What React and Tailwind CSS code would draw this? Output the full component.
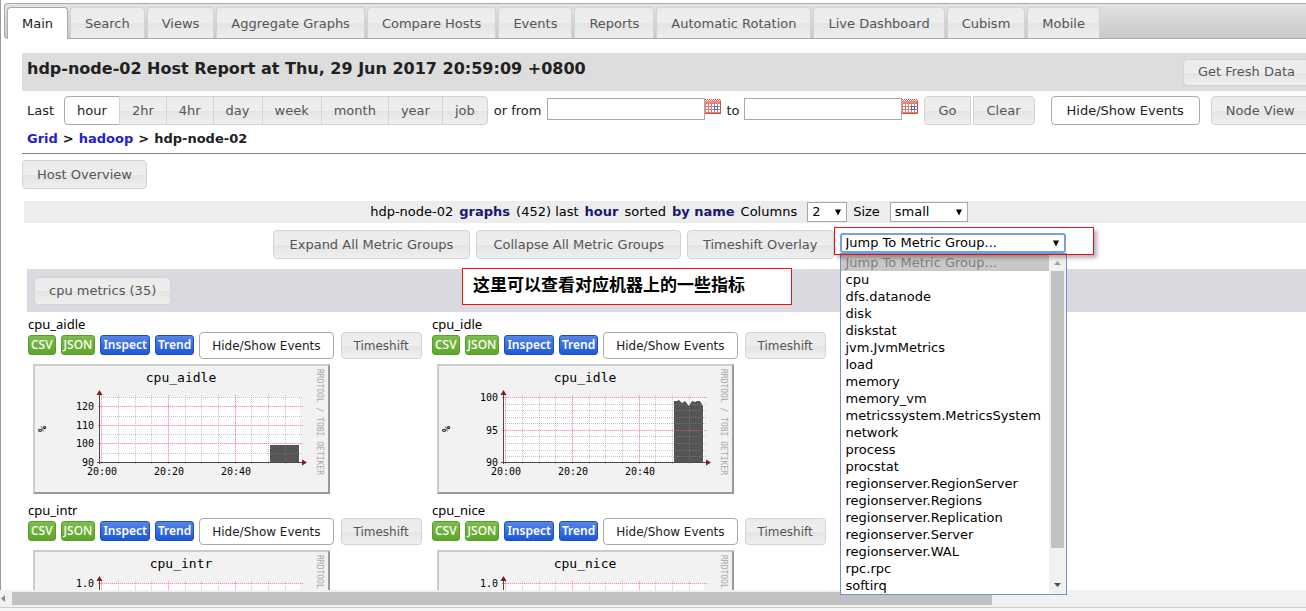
import React from "react";

const TABS = [
  "Main", "Search", "Views", "Aggregate Graphs", "Compare Hosts", "Events", "Reports",
  "Automatic Rotation", "Live Dashboard", "Cubism", "Mobile",
];

const RANGES = ["hour", "2hr", "4hr", "day", "week", "month", "year", "job"];

const GROUPS = [
  "Jump To Metric Group...", "cpu", "dfs.datanode", "disk", "diskstat", "jvm.JvmMetrics", "load",
  "memory", "memory_vm", "metricssystem.MetricsSystem", "network", "process", "procstat",
  "regionserver.RegionServer", "regionserver.Regions", "regionserver.Replication",
  "regionserver.Server", "regionserver.WAL", "rpc.rpc", "softirq",
];

const TIMES = [["20:00", 67], ["20:20", 134], ["20:40", 201]];

const GRAPHS = [
  {
    name: "cpu_aidle",
    unit: "%",
    labels: [["120", 40], ["110", 59], ["100", 77], ["90", 96]],
    times: TIMES,
    minor: [31, 50, 68, 87],
    area: "235,79 264,79 264,96 235,96",
  },
  {
    name: "cpu_idle",
    unit: "%",
    labels: [["100", 31], ["95", 64], ["90", 96]],
    times: TIMES,
    minor: [38, 44, 51, 57, 70, 77, 84, 90],
    area: "235,35 238,35 240,34 243,37 246,35 250,40 253,35 256,36 258,35 261,35 264,40 264,96 235,96",
  },
  { name: "cpu_intr", labels: [["1.0", 31]], times: [], minor: [44, 57, 77, 90] },
  { name: "cpu_nice", labels: [["1.0", 31]], times: [], minor: [44, 57, 77, 90] },
];

const GRADIENT = "bg-[linear-gradient(#ebebeb_0%,#eeeeee_50%,#e4e4e4_52%,#efefef_100%)]";

function Button({ children, active = false, size = "h-[29px] px-[14px]", round = "rounded-[4px]" }) {
  const look = active
    ? "border-[#aaaaaa] bg-white text-[#212121]"
    : `border-[#d3d3d3] text-[#555555] ${GRADIENT}`;
  return (
    <button type="button" className={`shrink-0 border whitespace-nowrap ${size} ${round} ${look}`}>
      {children}
    </button>
  );
}

function CalendarIcon() {
  return (
    <svg width="16" height="15" viewBox="0 0 16 15" shapeRendering="crispEdges" aria-hidden="true">
      <rect width="16" height="15" fill="#ec7a70" />
      <path d="M0 .5H16" stroke="#a8443c" strokeDasharray="1 1" />
      <path d="M1 .5H16M0 1.5H16" stroke="#fff" strokeDasharray="1 1" />
      <rect y="2" width="16" height="2" fill="#f0877c" />
      <path
        d="M1 5h2v2h-2zM4 5h2v2h-2zM7 5h2v2h-2zM10 5h2v2h-2zM13 5h2v2h-2zM1 8h2v2h-2zM4 8h2v2h-2zM7 8h2v2h-2zM10 8h2v2h-2zM13 8h2v2h-2zM1 11h2v2h-2zM4 11h2v2h-2zM7 11h2v2h-2zM10 11h2v2h-2zM13 11h2v2h-2z"
        fill="#fff"
      />
      <path d="M0 14.500H16M15.500 2V15" stroke="#c9544a" />
      <rect x="9.5" y="7.5" width="3" height="3" fill="#fff" stroke="#2d6be0" />
    </svg>
  );
}

function DateField({ label }) {
  return (
    <span className="mt-[2px] flex shrink-0 items-start self-start">
      <input aria-label={label} className="h-[22px] w-[158px] border border-[#a9a9a9] bg-white px-1" />
      <button type="button" aria-label={`Pick ${label}`} className="mt-px"><CalendarIcon /></button>
    </span>
  );
}

function Select({ label, options, width, look = "h-5 border-[#a9a9a9]", arrow = "right-[5px]" }) {
  return (
    <span className={`relative inline-flex items-center ${width}`}>
      <select aria-label={label} className={`w-full appearance-none border bg-white pl-1 text-[13px] leading-4 text-black ${look}`}>
        {options.map((o) => <option key={o}>{o}</option>)}
      </select>
      <svg className={`pointer-events-none absolute ${arrow}`} width="8" height="7" viewBox="0 0 8 7" aria-hidden="true">
        <path d="M1 .5h6L4 6.5z" fill="#000" />
      </svg>
    </span>
  );
}

function MetricGroupMenu() {
  return (
    <div className="absolute top-5 left-0 z-20 flex h-[342px] w-[227px] border border-[#6f92d6] bg-white">
      <ul className="min-w-0 flex-1 text-[13px] leading-[17px] text-black">
        {GROUPS.map((g, i) => (
          <li key={g} className={`h-[17px] pl-[5px] whitespace-nowrap ${i === 0 ? "bg-[#c8c8c8] text-[#808080]" : ""}`}>{g}</li>
        ))}
      </ul>
      <div className="flex w-[17px] shrink-0 flex-col items-center bg-[#f1f1f1]">
        <svg className="h-[17px] w-[9px] shrink-0" viewBox="0 0 9 17" aria-hidden="true"><path d="M1 11h7L4.500 7z" fill="#a3a3a3" /></svg>
        <div className="w-[13px] flex-1 bg-[#c1c1c1]" />
        <div className="h-[29px]" />
        <svg className="h-[17px] w-[9px] shrink-0" viewBox="0 0 9 17" aria-hidden="true"><path d="M1 6h7L4.500 10z" fill="#505050" /></svg>
      </div>
    </div>
  );
}

function Graph({ name, unit, labels, times, minor, area }) {
  const major = [66, 133, 200].map((x) => `M${x + 0.5} 29V98`)
    .concat(labels.map(([, y]) => `M63 ${y + 0.5}H268`))
    .join("");
  return (
    <svg
      width="297"
      height="130"
      viewBox="-2 -2 297 130"
      fontFamily="'DejaVu Sans Mono', monospace"
      role="img"
      aria-label={`${name} graph`}
      className="ml-[5px] block"
    >
      <rect x="-2" y="-2" width="297" height="130" fill="#cccccc" />
      <path d="M295 -2V128H-2L0 126H293V0z" fill="#9a9a9a" />
      <rect width="293" height="126" fill="#f2f2f2" />
      <rect x="65" y="31" width="200" height="65" fill="#fff" />
      {area && <polygon points={area} fill="#555555" />}
      <g strokeWidth="1" strokeDasharray="1 1">
        {[83, 100, 116, 150, 166, 183, 216, 233, 250].map((x) => (
          <path key={x} d={`M${x + 0.5} 29V98`} stroke="#8c8c8c" strokeOpacity=".5" />
        ))}
        {minor.map((y) => <path key={y} d={`M64 ${y + 0.5}H268`} stroke="#8c8c8c" strokeOpacity=".5" />)}
      </g>
      <path d={major} stroke="#ff5a74" strokeOpacity=".2" />
      <path d={major} stroke="#ff5a74" strokeOpacity=".6" strokeDasharray="1 1" />
      <path d="M64.500 98V28M62 96.500H268" stroke="#4a4a4a" />
      <path d="M61.500 29h6l-3-5zM267 93.500v6l5-3z" fill="#7f1d1d" />
      <text x="146" y="16" textAnchor="middle" fontSize="13">{name}</text>
      <g fontSize="10">
        {labels.map(([t, y]) => <text key={t} x="59" y={y + 4} textAnchor="end">{t}</text>)}
        {times.map(([t, x]) => <text key={t} x={x} y="109" textAnchor="middle">{t}</text>)}
      </g>
      {unit && <text transform="translate(11 66) rotate(-90)" fontSize="10" fontWeight="bold">{unit}</text>}
      <text transform="translate(282 3) rotate(90)" fontSize="8" fill="#a8a8a8">RRDTOOL / TOBI OETIKER</text>
    </svg>
  );
}

const GREEN = "border-[#5a9e2a] bg-[linear-gradient(#7cbd4c,#5fa52a)] font-medium";
const BLUE = "border-[#1f50b8] bg-[linear-gradient(#5585e6,#1c58d8)] font-semibold";

function Chip({ children, tone }) {
  return (
    <button
      type="button"
      className={`mt-[3px] h-5 self-start rounded-[3px] border px-[2px] font-['Noto_Sans'] text-xs leading-[18px] whitespace-nowrap text-white ${tone}`}
    >
      {children}
    </button>
  );
}

function MetricCard({ graph }) {
  return (
    <section className="h-[186px]">
      <h3 className="h-[15px] font-['Noto_Sans'] text-[13px] leading-[15px] text-black">{graph.name}</h3>
      <div className="mb-[5px] flex items-center gap-[5px] whitespace-nowrap">
        <Chip tone={GREEN}>CSV</Chip>
        <Chip tone={GREEN}>JSON</Chip>
        <Chip tone={BLUE}>Inspect</Chip>
        <Chip tone={BLUE}>Trend</Chip>
        <Button active size="mr-[2px] h-[27px] px-3 text-xs">Hide/Show Events</Button>
        <Button size="h-[27px] px-3 text-xs">Timeshift</Button>
      </div>
      <Graph {...graph} />
    </section>
  );
}

export default function App() {
  return (
    <div className="flex h-screen flex-col overflow-hidden bg-white font-['DejaVu_Sans',Verdana,'Noto_Sans_CJK_SC',sans-serif] text-[13px] text-[#212121]">
      <div className="min-h-0 flex-1 border-l border-[#999999] pt-[3px]">
        <nav className="ml-[3px] flex h-9 items-end gap-[2px] rounded-l-[4px] border border-r-0 border-[#aaaaaa] bg-[linear-gradient(#e3e3e3,#c9c9c9)] pl-[2px] whitespace-nowrap">
          {TABS.map((t, i) => (
            <a
              key={t}
              href="#"
              className={`shrink-0 rounded-t-[4px] border border-b-0 px-[14px] leading-[31px] ${
                i === 0
                  ? "-mb-px h-8 border-[#aaaaaa] bg-white text-[#212121]"
                  : `h-[31px] border-[#d3d3d3] text-[#555555] ${GRADIENT}`
              }`}
            >
              {t}
            </a>
          ))}
        </nav>

        <main className="pt-[14px] pl-[21px]">
          <header className="flex h-[38px] items-center justify-between bg-[#dddddd] pl-[5px]">
            <h1 className="pb-[6px] text-base font-bold whitespace-nowrap">hdp-node-02 Host Report at Thu, 29 Jun 2017 20:59:09 +0800</h1>
            <div className="-mr-1"><Button size="h-[27px] px-[14px]">Get Fresh Data</Button></div>
          </header>

          <div className="mt-[5px] flex h-[29px] items-center pl-[5px] whitespace-nowrap">
            <span className="mr-[10px]">Last</span>
            <div className="flex">
              {RANGES.map((r, i) => (
                <Button
                  key={r}
                  active={i === 0}
                  size={i === 0 ? "h-[29px] px-3" : "-ml-px h-[29px] px-3"}
                  round={i === 0 ? "rounded-l-[4px]" : i === RANGES.length - 1 ? "rounded-r-[4px]" : "rounded-none"}
                >
                  {r}
                </Button>
              ))}
            </div>
            <span className="mx-[6px]">or from</span>
            <DateField label="start" />
            <span className="mx-[5px]">to</span>
            <DateField label="end" />
            <div className="ml-[6px] flex gap-[2px]">
              <Button round="rounded-l-[4px]" size="h-[29px] px-[13px]">Go</Button>
              <Button round="rounded-r-[4px]" size="h-[29px] px-[13px]">Clear</Button>
            </div>
            <div className="ml-4 flex gap-[11px]">
              <Button active size="h-[29px] px-[15px]">Hide/Show Events</Button>
              <Button>Node View</Button>
            </div>
          </div>

          <div className="flex h-[29px] items-center gap-[5px] border-b border-[#808080] pl-[5px] font-bold">
            <a href="#" className="text-[#2222cc]">Grid</a>
            <span>&gt;</span>
            <a href="#" className="text-[#2222cc]">hadoop</a>
            <span>&gt;</span>
            <span>hdp-node-02</span>
          </div>

          <div className="mt-[6px] flex"><Button>Host Overview</Button></div>

          <div className="mt-3 ml-[2px] flex h-[22px] items-center justify-center gap-[6px] bg-[#ededed] pl-2 whitespace-nowrap text-black">
            <span>hdp-node-02</span>
            <b className="text-[#191970]">graphs</b>
            <span>(452) last</span>
            <b className="text-[#191970]">hour</b>
            <span>sorted</span>
            <b className="text-[#191970]">by name</b>
            <span className="mr-1">Columns</span>
            <Select label="Columns" options={["2"]} width="w-10" />
            <span className="mr-1">Size</span>
            <Select label="Size" options={["small"]} width="w-[78px]" />
          </div>

          <div className="mt-[7px] ml-[2px] flex items-start justify-center gap-[6px] pl-2">
            <Button size="h-[29px] px-4">Expand All Metric Groups</Button>
            <Button size="h-[29px] px-4">Collapse All Metric Groups</Button>
            <Button size="h-[29px] px-[15px]">Timeshift Overlay</Button>
            <div className="relative mt-[3px] flex">
              <Select
                label="Metric group"
                options={GROUPS}
                width="w-[226px]"
                look="h-5 rounded-[3px] border-2 border-[#7a9fe0]"
                arrow="right-[6px]"
              />
              <MetricGroupMenu />
              <div className="pointer-events-none absolute top-[-6px] left-[-6px] z-20 h-7 w-[260px] border border-[#ee1111] shadow-[3px_3px_4px_rgba(0,0,0,0.3)]" />
            </div>
          </div>

          <div className="relative mt-[10px] ml-[5px] flex h-[43px] items-center bg-[#d9d9df] pl-[7px]">
            <Button size="h-7 px-[14px]">cpu metrics (35)</Button>
            <p className="absolute top-[-1px] left-[435px] h-[37px] w-[330px] border border-[#ee1111] bg-white pl-[10px] font-['Noto_Sans_CJK_SC',sans-serif] text-[17px] leading-[30px] font-bold text-black">
              这里可以查看对应机器上的一些指标
            </p>
          </div>

          <div className="mt-[5px] ml-[6px] grid grid-cols-[404px_404px]">
            {GRAPHS.map((g) => <MetricCard key={g.name} graph={g} />)}
          </div>
        </main>
      </div>

      <footer className="relative z-10 h-[21px] shrink-0 bg-[#f5f5f5]">
        <div className="flex h-[18px] items-center border-b border-[#cccccc] bg-[#f1f1f1]">
          <svg className="h-[9px] w-3 shrink-0" viewBox="0 0 12 9" aria-hidden="true"><path d="M5 1v7L1 4.500z" fill="#8a8a8a" /></svg>
          <div className="h-[13px] w-[75%] bg-[#c1c1c1]" />
        </div>
      </footer>
    </div>
  );
}
